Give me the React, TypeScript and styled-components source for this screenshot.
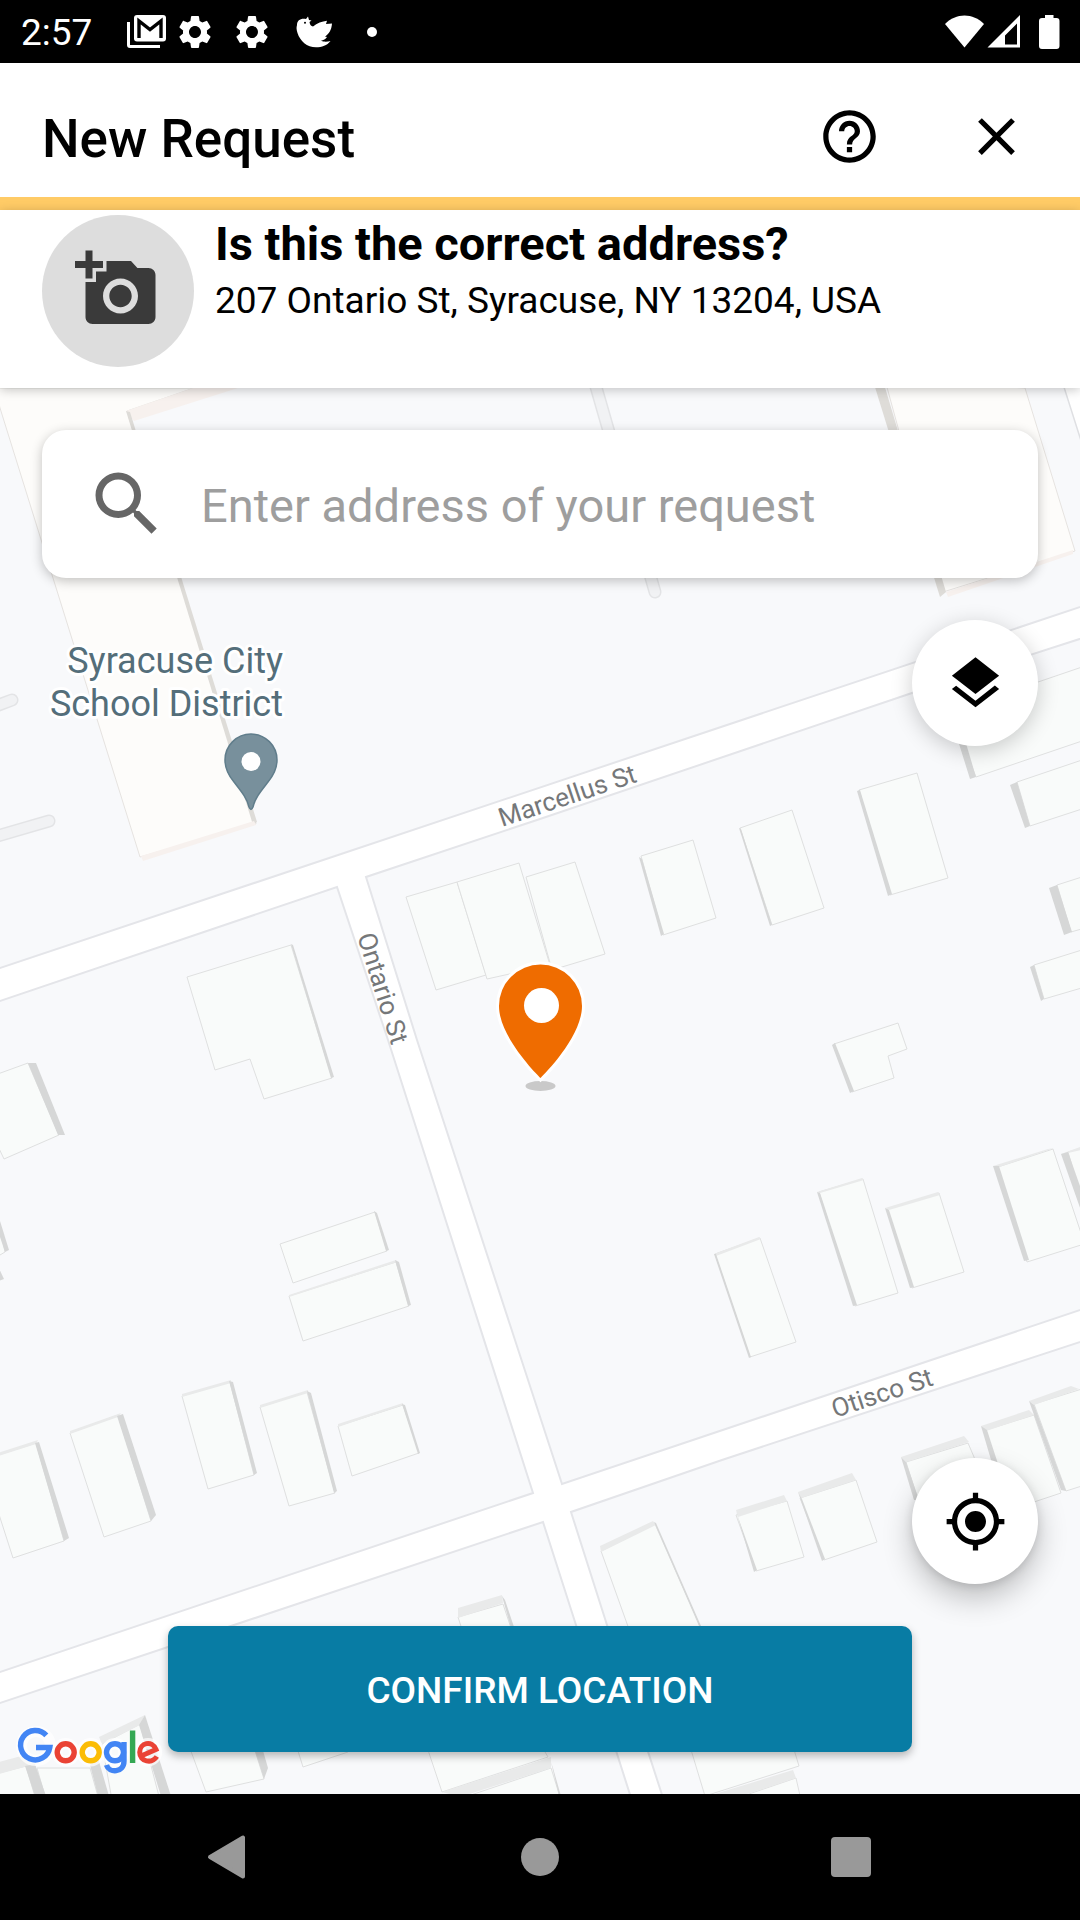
import React from "react";
import styled, { createGlobalStyle } from "styled-components";
import {
  MdAddAPhoto,
  MdClose,
  MdHelpOutline,
  MdLayers,
  MdMyLocation,
  MdSearch,
  MdSettings,
} from "react-icons/md";

const GlobalStyle = createGlobalStyle`
  *, *::before, *::after { box-sizing: border-box; }
  html, body { margin: 0; padding: 0; }
  body {
    background: #000;
    color: #000;
    font-family: Roboto, "Noto Sans", sans-serif;
  }
  h1, h2, p { margin: 0; }
  button, input { font-family: inherit; }
`;

const Page = styled.div`
  display: flex;
  flex-direction: column;
  min-height: 100vh;
`;

const StatusBar = styled.div`
  display: flex;
  align-items: center;
  justify-content: space-between;
  height: 63px;
  padding: 0 20px 0 21px;
  background: #000;
  color: #fff;
`;

const StatusGroup = styled.div`
  display: flex;
  align-items: center;
`;

const Clock = styled.time`
  min-width: 102px;
  padding-top: 2px;
  font-size: 37px;
  line-height: 44px;
`;

const StatusSlot = styled.span<{ $width: number }>`
  display: flex;
  align-items: center;
  justify-content: center;
  width: ${(p) => p.$width}px;
  height: 63px;
`;

const Header = styled.header`
  display: flex;
  align-items: center;
  padding: 13px 10px 0 42px;
  height: 147px;
  background: #fff;
  border-bottom: 13px solid #ffcb66;
`;

const Title = styled.h1`
  flex: 1;
  padding-top: 4px;
  font-size: 53px;
  font-weight: 500;
  line-height: 60px;
`;

const HeaderButton = styled.button`
  display: flex;
  align-items: center;
  justify-content: center;
  width: 147px;
  height: 121px;
  padding: 0;
  border: 0;
  background: none;
  color: #000;
  font-size: 63px;
`;

const AddressPanel = styled.section`
  position: relative;
  z-index: 1;
  display: flex;
  gap: 21px;
  padding: 5px 42px 21px;
  background: #fff;
  box-shadow: 0 2px 10px rgba(0, 0, 0, 0.22);
`;

const PhotoButton = styled.button`
  display: flex;
  align-items: center;
  justify-content: center;
  flex: none;
  width: 152px;
  height: 152px;
  padding: 0 2px 4px 0;
  border: 0;
  border-radius: 50%;
  background: #ddd;
  color: #3a3a3a;
  font-size: 84px;
`;

const AddressText = styled.div`
  padding-top: 1px;
`;

const Question = styled.h2`
  font-size: 47px;
  font-weight: 700;
  line-height: 56px;
`;

const Address = styled.p`
  font-size: 37px;
  line-height: 58px;
`;

const MapArea = styled.main`
  position: relative;
  display: flex;
  flex: 1;
  flex-direction: column;
  padding: 42px;
  overflow: hidden;
  background: #f8f9fb;
`;

const MapCanvas = styled.svg`
  position: absolute;
  inset: 0;
  width: 100%;
  height: 100%;
  font-family: Roboto, "Noto Sans", sans-serif;
`;

const SearchCard = styled.label`
  position: relative;
  display: flex;
  align-items: center;
  gap: 32px;
  height: 148px;
  padding: 0 43px;
  border-radius: 24px;
  background: #fff;
  box-shadow: 0 3px 12px rgba(0, 0, 0, 0.24);
  color: #666;

  svg {
    flex: none;
    width: 84px;
    height: 84px;
  }
`;

const SearchInput = styled.input`
  flex: 1;
  min-width: 0;
  padding: 4px 0 0;
  border: 0;
  outline: 0;
  background: none;
  color: #000;
  font-size: 47px;
  line-height: 56px;

  &::placeholder {
    color: #9e9e9e;
    opacity: 1;
  }
`;

const RoundButton = styled.button<{ $raised?: boolean }>`
  position: relative;
  display: flex;
  align-items: center;
  justify-content: center;
  align-self: flex-end;
  width: 126px;
  height: 126px;
  margin: 42px 0;
  padding: 0;
  border: 0;
  border-radius: 50%;
  background: #fff;
  box-shadow: ${(p) =>
    p.$raised
      ? "0 14px 30px rgba(0, 0, 0, 0.24), 0 2px 10px rgba(0, 0, 0, 0.12)"
      : "0 5px 22px rgba(0, 0, 0, 0.2)"};
  color: #000;
  font-size: 63px;
`;

const Spacer = styled.div`
  flex: 1;
`;

const ConfirmButton = styled.button`
  position: relative;
  height: 126px;
  margin: 0 126px;
  padding: 2px 0 0;
  border: 0;
  border-radius: 10px;
  background: #087ca4;
  box-shadow: 0 4px 8px rgba(0, 0, 0, 0.28);
  color: #fff;
  font-size: 37px;
  font-weight: 500;
  text-transform: uppercase;
`;

const Logo = styled.svg`
  position: absolute;
  left: 16px;
  bottom: 18px;
  width: 146px;
  height: 50px;
`;

const NavBar = styled.nav`
  display: flex;
  align-items: center;
  justify-content: center;
  gap: 185px;
  height: 126px;
  background: #000;
`;

const NavButton = styled.button`
  display: flex;
  align-items: center;
  justify-content: center;
  width: 126px;
  height: 126px;
  padding: 0;
  border: 0;
  background: none;
`;

type Building = { roof: string; wall?: string; top?: string; warm?: boolean };

const buildings: Building[] = [
  { warm: true, roof: "-5,388 194,388 127,411 256,824 140,857 0,408", wall: "126,411 130,412 257,822 253,825", top: "126,411 193,388 238,388 134,421" },
  { warm: true, roof: "885,380 1025,388 1075,551 943,592", wall: "874,384 884,384 946,592 940,597" },
  { roof: "406,897 457,882 486,975 436,990" },
  { roof: "526,877 575,862 605,954 552,970" },
  { roof: "457,882 519,863 550,965 487,979" },
  { roof: "187,977 291,945 332,1078 264,1099 250,1059 215,1070", wall: "291,944 293,945 334,1077 331,1078" },
  { roof: "641,856 693,840 716,918 663,935", wall: "639,857 642,859 664,934 661,936" },
  { roof: "740,828 792,810 824,908 772,925", wall: "739,828 741,829 772,925 770,926" },
  { roof: "859,790 917,773 948,878 890,895", wall: "857,791 860,790 892,894 888,896" },
  { roof: "950,712 1085,666 1085,740 976,777", wall: "950,715 957,713 976,777 970,779" },
  { roof: "1017,782 1085,759 1085,808 1030,826", wall: "1010,785 1017,782 1030,826 1025,828" },
  { roof: "1057,885 1085,876 1085,928 1071,932", wall: "1049,888 1057,885 1072,932 1064,935" },
  { roof: "1034,965 1085,949 1085,987 1044,999", wall: "1030,967 1034,965 1044,999 1041,1001" },
  { roof: "834,1044 898,1023 907,1049 888,1056 894,1078 852,1092", wall: "832,1045 835,1043 854,1091 850,1093" },
  { roof: "715,1254 760,1238 796,1342 750,1357", wall: "714,1254 716,1254 751,1357 749,1358", top: "714,1254 759,1237 761,1239 716,1256" },
  { roof: "819,1192 863,1179 898,1293 855,1306", wall: "817,1192 820,1193 857,1305 853,1306", top: "817,1192 862,1178 864,1180 820,1193" },
  { roof: "887,1209 939,1193 964,1272 912,1288", wall: "885,1208 889,1210 914,1287 910,1288", top: "885,1208 938,1192 940,1195 889,1210" },
  { roof: "998,1167 1053,1149 1081,1233 1081,1245 1027,1262", wall: "993,1166 999,1166 1029,1260 1024,1261", top: "993,1166 1048,1149 1054,1148 999,1167" },
  { roof: "1068,1152 1085,1147 1085,1210", wall: "1061,1154 1068,1152 1085,1200 1085,1222", top: "1061,1154 1085,1145 1085,1149 1068,1153" },
  { roof: "-5,1075 28,1063 59,1135 4,1159 -5,1140", wall: "28,1063 36,1063 65,1135 58,1135" },
  { roof: "-5,1200 -5,1258 5,1252", wall: "-5,1205 9,1250 5,1252 -5,1222" },
  { roof: "-5,1265 -5,1285 0,1280", wall: "-3,1264 4,1279 -1,1281" },
  { roof: "280,1244 375,1212 387,1251 293,1283", wall: "374,1211 377,1213 389,1250 386,1251" },
  { roof: "289,1296 396,1262 409,1306 303,1341", wall: "395,1260 399,1262 411,1305 408,1306", top: "289,1295 396,1260 397,1262 289,1297" },
  { roof: "182,1396 230,1382 254,1475 208,1489", wall: "229,1381 233,1382 257,1473 254,1475", top: "182,1394 231,1380 231,1383 182,1397" },
  { roof: "260,1407 307,1392 335,1493 289,1506", wall: "307,1391 311,1393 337,1491 334,1493", top: "260,1405 308,1390 308,1393 260,1408" },
  { roof: "338,1426 403,1405 419,1453 352,1476", wall: "402,1404 405,1405 420,1453 418,1454", top: "338,1424 403,1403 403,1405 338,1427" },
  { roof: "70,1433 118,1415 151,1521 104,1537", wall: "117,1416 123,1414 156,1515 151,1521", top: "70,1431 121,1413 118,1417 70,1434" },
  { roof: "-5,1456 36,1443 64,1541 13,1558 -5,1502", wall: "35,1443 39,1442 69,1538 64,1541", top: "-5,1454 38,1440 36,1444 -5,1457" },
  { roof: "736,1515 787,1501 804,1557 756,1571", wall: "736,1511 738,1517 757,1570 754,1572", top: "736,1510 784,1495 787,1501 738,1517" },
  { roof: "800,1498 856,1480 877,1542 824,1560", wall: "798,1492 802,1499 825,1559 822,1561", top: "798,1492 852,1473 856,1480 801,1498" },
  { roof: "601,1551 655,1524 700,1626 715,1660 640,1660", wall: "654,1522 656,1523 701,1626 699,1626", top: "600,1546 653,1521 656,1525 601,1552" },
  { roof: "906,1462 968,1443 974,1457 985,1490 918,1500", wall: "901,1457 906,1462 919,1500 914,1500", top: "901,1457 964,1436 969,1442 906,1462" },
  { roof: "986,1430 1034,1415 1061,1493 1010,1510", wall: "981,1426 987,1430 1000,1470 994,1470", top: "981,1426 1029,1410 1034,1415 986,1431" },
  { roof: "1034,1404 1085,1388 1085,1485 1066,1491", wall: "1029,1401 1034,1405 1066,1491 1061,1490", top: "1029,1401 1071,1386 1079,1389 1034,1405" },
  { roof: "458,1617 503,1604 525,1670 475,1670", wall: "502,1596 505,1600 525,1660 520,1660", top: "458,1608 502,1595 503,1603 458,1618" },
  { roof: "102,1744 140,1724 160,1800 112,1800", wall: "139,1725 145,1715 171,1796 161,1796", top: "99,1737 145,1715 140,1725 102,1744" },
  { roof: "37,1768 90,1768 99,1800 46,1800", wall: "90,1765 98,1758 109,1796 98,1796" },
  { roof: "-5,1774 26,1766 36,1800 -5,1800", wall: "25,1766 35,1764 46,1796 35,1796", top: "-5,1763 25,1755 35,1764 -5,1775" },
  { roof: "185,1735 250,1735 264,1779 206,1792", wall: "250,1735 257,1730 268,1768 264,1779" },
  { roof: "293,1735 348,1735 348,1752 303,1767" },
  { roof: "423,1735 535,1735 548,1757 442,1792" },
  { roof: "468,1796 551,1768 561,1800 468,1800", wall: "551,1762 553,1768 561,1796 559,1796", top: "442,1792 551,1757 551,1768 460,1797" },
  { roof: "685,1730 788,1730 799,1766 705,1796" },
  { roof: "743,1796 796,1778 801,1800 743,1800", top: "705,1797 793,1770 796,1778 738,1797" },
];

const paths = [
  "M-20 712 L12 700",
  "M-20 841 L49 821",
  "M590 366 L655 592",
];

const roadOutline =
  "M-9 971 L1089 604 V636 L912 693 L540 819 L366 877 L417 1040 L562 1484 L1089 1307 V1339 L722 1460 L571 1512 L607 1625 L665 1804 H633 L576 1625 L543 1522 L234 1625 L-9 1706 V1675 L533 1493 L388 1040 L337 887 L-9 1004 Z";

function StreetMap() {
  return (
    <MapCanvas viewBox="0 388 1080 1406" preserveAspectRatio="xMidYMid slice" role="img" aria-label="Map of the request location">
      {paths.map((d) => (
        <g key={d} fill="none" strokeLinecap="round">
          <path d={d} stroke="#e3e4e6" strokeWidth="13" />
          <path d={d} stroke="#f1f2f4" strokeWidth="10" />
        </g>
      ))}
      <path d="M1063 384 L1084 450 V384 Z" fill="#fff" stroke="#dfe0e3" strokeWidth="1.5" />
      <path d={roadOutline} fill="#fff" stroke="#e4e5e9" strokeWidth="2" />
      {buildings.map((b) => (
        <g key={b.roof}>
          <polygon
            points={b.roof}
            fill={b.warm ? "#fdfcfa" : "#f9fbfa"}
            stroke={b.warm ? "#e6e3e0" : "#dfe0e0"}
            strokeWidth="1"
          />
          {b.top && <polygon points={b.top} fill={b.warm ? "#f7f1ee" : "#e9eaea"} />}
          {b.wall && <polygon points={b.wall} fill={b.warm ? "#dedcd8" : "#d6d7d7"} />}
        </g>
      ))}
      <path d="M141 856 L143 861 L256 825 L254 821 Z" fill="#f7f1ee" />
      <path d="M946 592 L948 597 L1073 554 L1073 550 Z" fill="#f7f1ee" />

      <g fill="#757779" fontSize="26">
        <text transform="translate(502 827) rotate(-18.5)">Marcellus St</text>
        <text transform="translate(357 936) rotate(72.5)">Ontario St</text>
        <text transform="translate(835 1418) rotate(-18.4)">Otisco St</text>
      </g>

      <g
        fill="#546e7a"
        stroke="#fff"
        strokeWidth="6"
        strokeLinejoin="round"
        paintOrder="stroke"
        fontSize="36"
        textAnchor="end"
      >
        <text x="283" y="673">Syracuse City</text>
        <text x="283" y="716">School District</text>
      </g>
      <path
        d="M225 760 A26 26 0 0 1 277 760 C277 769 273 776 268 782 C261 791 255 798 253 807 Q251 812 249 807 C247 798 241 791 234 782 C229 776 225 769 225 760 Z"
        fill="#78909c"
        stroke="#607d8b"
        strokeWidth="1.5"
      />
      <circle cx="251" cy="761.5" r="9.5" fill="#fff" />

      <ellipse cx="540.5" cy="1086" rx="15" ry="5" fill="#c9c9c9" />
      <path
        d="M499 1006 A41.5 41.5 0 0 1 582 1006 C582 1038 540.5 1078 540.5 1078 C540.5 1078 499 1038 499 1006 Z"
        fill="#ef6c00"
        stroke="#fff"
        strokeWidth="6"
        paintOrder="stroke"
      />
      <circle cx="541.5" cy="1005.5" r="17.5" fill="#fff" />
    </MapCanvas>
  );
}

function GoogleLogo() {
  return (
    <Logo viewBox="16 1726 146 50" role="img" aria-label="Google">
      <g fill="none" stroke="#fff" strokeOpacity="0.7" strokeWidth="11">
        <circle cx="36" cy="1746" r="14.5" />
        <circle cx="65.7" cy="1752.3" r="8.7" />
        <circle cx="90.7" cy="1752.3" r="8.7" />
        <circle cx="115" cy="1752.3" r="8.7" />
        <circle cx="148" cy="1752.3" r="8.7" />
      </g>
      <g fill="none" strokeWidth="5.4">
        <path d="M46.300 1735.400 A14.700 14.700 0 1 0 49.800 1747.500 H36" stroke="#4285f4" />
        <circle cx="65.7" cy="1752.3" r="8.5" stroke="#ea4335" />
        <circle cx="90.7" cy="1752.3" r="8.5" stroke="#fbbc05" />
        <circle cx="115" cy="1752.3" r="8.5" stroke="#4285f4" />
        <path d="M124 1742 V1761 C124 1773 109 1773.500 106.500 1765" stroke="#4285f4" />
        <path d="M132.600 1730.500 V1763" stroke="#34a853" />
        <path d="M141 1756 L156 1749.500 C152 1739.500 139.700 1743 139.700 1752.300 C139.700 1762 152 1764 156.800 1756.500" stroke="#ea4335" strokeWidth="5" />
      </g>
    </Logo>
  );
}

function GmailGlyph() {
  return (
    <svg width="40" height="34" viewBox="0 0 40 34" aria-hidden="true">
      <path d="M0 7 H3 V30 H33 V33 H3 Q0 33 0 30 Z" fill="#fff" />
      <rect x="7" y="0" width="32" height="26.5" rx="3" fill="#fff" />
      <path d="M12 23 V6 L23 14.5 L34 6 V23" fill="none" stroke="#000" strokeWidth="3.4" />
    </svg>
  );
}

function BirdGlyph() {
  return (
    <svg width="46" height="36" viewBox="291 14 46 36" aria-hidden="true">
      <path
        d="M297 25 C297 20 301 18 306 19 L308 16.5 L309 20 L311.500 20.500 L309.500 22 C310 25 311 26 313 26.500 C317 23 322 21.500 327 20.800 L326 24 L332 23.500 C331.500 30 329 34 325 36.500 L327 37 C325.500 39 323.500 40.500 321 40.500 C323 42 327 42 330.500 41 C327 45.500 322 47.300 316 47.300 C307 47.300 300 41 297.500 33 C296.500 30 296.200 27.500 297 25 Z"
        fill="#fff"
      />
      <circle cx="305" cy="22.800" r="1" fill="#000" />
    </svg>
  );
}

function SystemStatus() {
  return (
    <svg width="116" height="36" viewBox="944 13 116 36" role="img" aria-label="Wi-Fi, mobile signal and battery">
      <g fill="#fff">
        <path d="M945 23 C956 11.500 973 11.500 984 23 L964.500 46.500 Z" />
        <path d="M987.500 46.500 L1020 14 V46.500 Z M1005 43.500 H1017 V22.500 L1005 34.500 Z" fillRule="evenodd" />
        <path d="M1045 14 H1053.500 V17 H1056.500 Q1059.500 17 1059.500 20 V45 Q1059.500 48 1056.500 48 H1042 Q1039 48 1039 45 V20 Q1039 17 1042 17 H1045 Z" />
      </g>
    </svg>
  );
}

export default function App() {
  return (
    <>
      <GlobalStyle />
      <Page>
        <StatusBar>
          <StatusGroup>
            <Clock>2:57</Clock>
            <StatusSlot $width={48}><GmailGlyph /></StatusSlot>
            <StatusSlot $width={48}><MdSettings size={40} /></StatusSlot>
            <StatusSlot $width={66}><MdSettings size={40} /></StatusSlot>
            <StatusSlot $width={58}><BirdGlyph /></StatusSlot>
            <StatusSlot $width={58}>
              <svg width="10" height="10" viewBox="0 0 10 10" aria-hidden="true">
                <circle cx="5" cy="5" r="5" fill="#fff" />
              </svg>
            </StatusSlot>
          </StatusGroup>
          <SystemStatus />
        </StatusBar>

        <Header>
          <Title>New Request</Title>
          <HeaderButton type="button" aria-label="Help"><MdHelpOutline /></HeaderButton>
          <HeaderButton type="button" aria-label="Close"><MdClose /></HeaderButton>
        </Header>

        <AddressPanel>
          <PhotoButton type="button" aria-label="Add photo"><MdAddAPhoto /></PhotoButton>
          <AddressText>
            <Question>Is this the correct address?</Question>
            <Address>207 Ontario St, Syracuse, NY 13204, USA</Address>
          </AddressText>
        </AddressPanel>

        <MapArea>
          <StreetMap />
          <SearchCard>
            <MdSearch aria-hidden="true" />
            <SearchInput
              type="text"
              aria-label="Enter address of your request"
              placeholder="Enter address of your request"
            />
          </SearchCard>
          <RoundButton type="button" aria-label="Map layers"><MdLayers /></RoundButton>
          <Spacer />
          <RoundButton type="button" $raised aria-label="My location"><MdMyLocation /></RoundButton>
          <ConfirmButton type="button">Confirm location</ConfirmButton>
          <GoogleLogo />
        </MapArea>

        <NavBar>
          <NavButton type="button" aria-label="Back">
            <svg width="46" height="46" viewBox="0 0 46 46">
              <path d="M37 3.500 V42.500 L4 23 Z" fill="#999" stroke="#999" strokeWidth="4" strokeLinejoin="round" />
            </svg>
          </NavButton>
          <NavButton type="button" aria-label="Home">
            <svg width="38" height="38" viewBox="0 0 38 38">
              <circle cx="19" cy="19" r="19" fill="#999" />
            </svg>
          </NavButton>
          <NavButton type="button" aria-label="Recent apps">
            <svg width="40" height="40" viewBox="0 0 40 40">
              <rect width="40" height="40" rx="4" fill="#999" />
            </svg>
          </NavButton>
        </NavBar>
      </Page>
    </>
  );
}
